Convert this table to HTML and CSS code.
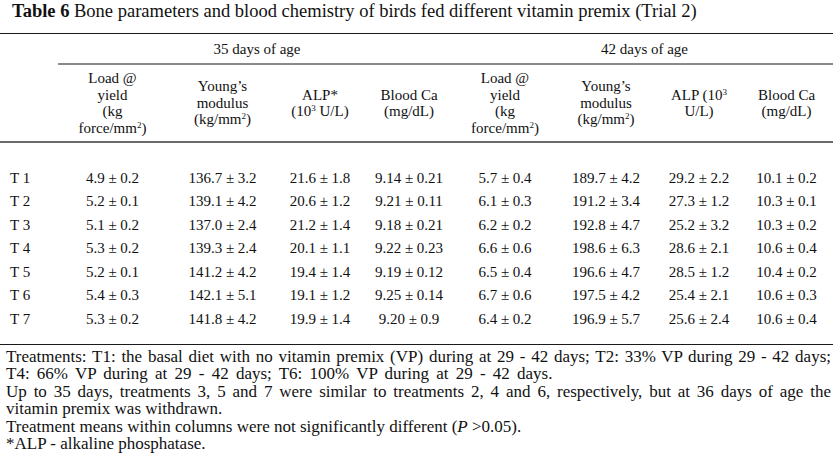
FILE: index.html
```
<!DOCTYPE html>
<html>
<head>
<meta charset="utf-8">
<link rel="stylesheet" href="styles.css">
</head>
<body>
<h1 class="title"><b>Table 6</b> Bone parameters and blood chemistry of birds fed different vitamin premix (Trial 2)</h1>
<table class="data">
  <colgroup>
    <col class="c0"><col class="c1"><col class="c2"><col class="c3"><col class="c4"><col class="c5"><col class="c6"><col class="c7"><col class="c8">
  </colgroup>
  <thead>
    <tr class="group">
      <th class="blank"></th>
      <th colspan="4" class="grp">35 days of age</th>
      <th colspan="4" class="grp">42 days of age</th>
    </tr>
    <tr class="cols">
      <th class="blank"></th>
      <th>Load @<br>yield<br>(kg<br>force/mm<sup>2</sup>)</th>
      <th>Young’s<br>modulus<br>(kg/mm<sup>2</sup>)</th>
      <th>ALP*<br>(10<sup>3</sup> U/L)</th>
      <th>Blood Ca<br>(mg/dL)</th>
      <th>Load @<br>yield<br>(kg<br>force/mm<sup>2</sup>)</th>
      <th>Young’s<br>modulus<br>(kg/mm<sup>2</sup>)</th>
      <th>ALP (10<sup>3</sup><br>U/L)</th>
      <th>Blood Ca<br>(mg/dL)</th>
    </tr>
  </thead>
  <tbody>
    <tr class="spacer"><td colspan="9"></td></tr>
    <tr><td>T 1</td><td>4.9 ± 0.2</td><td>136.7 ± 3.2</td><td>21.6 ± 1.8</td><td>9.14 ± 0.21</td><td>5.7 ± 0.4</td><td>189.7 ± 4.2</td><td>29.2 ± 2.2</td><td>10.1 ± 0.2</td></tr>
    <tr><td>T 2</td><td>5.2 ± 0.1</td><td>139.1 ± 4.2</td><td>20.6 ± 1.2</td><td>9.21 ± 0.11</td><td>6.1 ± 0.3</td><td>191.2 ± 3.4</td><td>27.3 ± 1.2</td><td>10.3 ± 0.1</td></tr>
    <tr><td>T 3</td><td>5.1 ± 0.2</td><td>137.0 ± 2.4</td><td>21.2 ± 1.4</td><td>9.18 ± 0.21</td><td>6.2 ± 0.2</td><td>192.8 ± 4.7</td><td>25.2 ± 3.2</td><td>10.3 ± 0.2</td></tr>
    <tr><td>T 4</td><td>5.3 ± 0.2</td><td>139.3 ± 2.4</td><td>20.1 ± 1.1</td><td>9.22 ± 0.23</td><td>6.6 ± 0.6</td><td>198.6 ± 6.3</td><td>28.6 ± 2.1</td><td>10.6 ± 0.4</td></tr>
    <tr><td>T 5</td><td>5.2 ± 0.1</td><td>141.2 ± 4.2</td><td>19.4 ± 1.4</td><td>9.19 ± 0.12</td><td>6.5 ± 0.4</td><td>196.6 ± 4.7</td><td>28.5 ± 1.2</td><td>10.4 ± 0.2</td></tr>
    <tr><td>T 6</td><td>5.4 ± 0.3</td><td>142.1 ± 5.1</td><td>19.1 ± 1.2</td><td>9.25 ± 0.14</td><td>6.7 ± 0.6</td><td>197.5 ± 4.2</td><td>25.4 ± 2.1</td><td>10.6 ± 0.3</td></tr>
    <tr class="last"><td>T 7</td><td>5.3 ± 0.2</td><td>141.8 ± 4.2</td><td>19.9 ± 1.4</td><td>9.20 ± 0.9</td><td>6.4 ± 0.2</td><td>196.9 ± 5.7</td><td>25.6 ± 2.4</td><td>10.6 ± 0.4</td></tr>
  </tbody>
</table>
<div class="notes">
  <p><span class="jl">Treatments: T1: the basal diet with no vitamin premix (VP) during at 29 - 42 days; T2: 33% VP during 29 - 42 days;</span><span class="wide">T4: 66% VP during at 29 - 42 days; T6: 100% VP during at 29 - 42 days.</span></p>
  <p><span class="jl">Up to 35 days, treatments 3, 5 and 7 were similar to treatments 2, 4 and 6, respectively, but at 36 days of age the</span>vitamin premix was withdrawn.</p>
  <p>Treatment means within columns were not significantly different (<i>P</i> &gt;0.05).</p>
  <p>*ALP - alkaline phosphatase.</p>
</div>
</body>
</html>
```
FILE: styles.css
```
html, body {
  margin: 0;
  padding: 0;
  background: #ffffff;
}
body {
  font-family: "Liberation Serif", "Times New Roman", serif;
  color: #111111;
  font-size: 15px;
  width: 833px;
}
.title {
  margin: 0;
  padding: 0 0 0 12px;
  font-size: 18.5px;
  font-weight: normal;
  line-height: 22px;
  height: 33px;
  box-sizing: border-box;
}
.title b {
  font-weight: bold;
}
.data {
  width: 833px;
  border-collapse: collapse;
  table-layout: fixed;
  border-top: 1px solid #1a1a1a;
}
.c0 { width: 58px; }
.c1 { width: 109px; }
.c2 { width: 111px; }
.c3 { width: 84px; }
.c4 { width: 94px; }
.c5 { width: 98px; }
.c6 { width: 104px; }
.c7 { width: 82px; }
.c8 { width: 93px; }
.data th {
  font-weight: normal;
  padding: 0;
  text-align: center;
  vertical-align: middle;
}
.group th {
  height: 28px;
  padding-top: 1px;
}
.group .grp {
  border-bottom: 2px solid #8a8a8a;
}
.cols th {
  line-height: 16.5px;
  height: 76px;
  border-bottom: 2px solid #6a6a6a;
}
sup {
  font-size: 0.6em;
  line-height: 0;
  vertical-align: 0.6em;
}
.spacer td {
  height: 17px;
  padding: 0;
}
.data td {
  padding: 0;
  text-align: center;
  height: 23.5px;
  line-height: 23.5px;
}
.data td:first-child {
  text-align: left;
  padding-left: 10px;
}
.data tr.last td {
  height: 36px;
  vertical-align: top;
}
.data tbody {
  border-bottom: 1px solid #1a1a1a;
}
.notes {
  padding: 3px 2px 0 6px;
  font-size: 17px;
  line-height: 17.5px;
}
.notes p {
  margin: 0;
  text-align: justify;
}
.notes .jl {
  display: block;
  text-align: justify;
  text-align-last: justify;
}
.notes .wide {
  word-spacing: 3px;
}
```
